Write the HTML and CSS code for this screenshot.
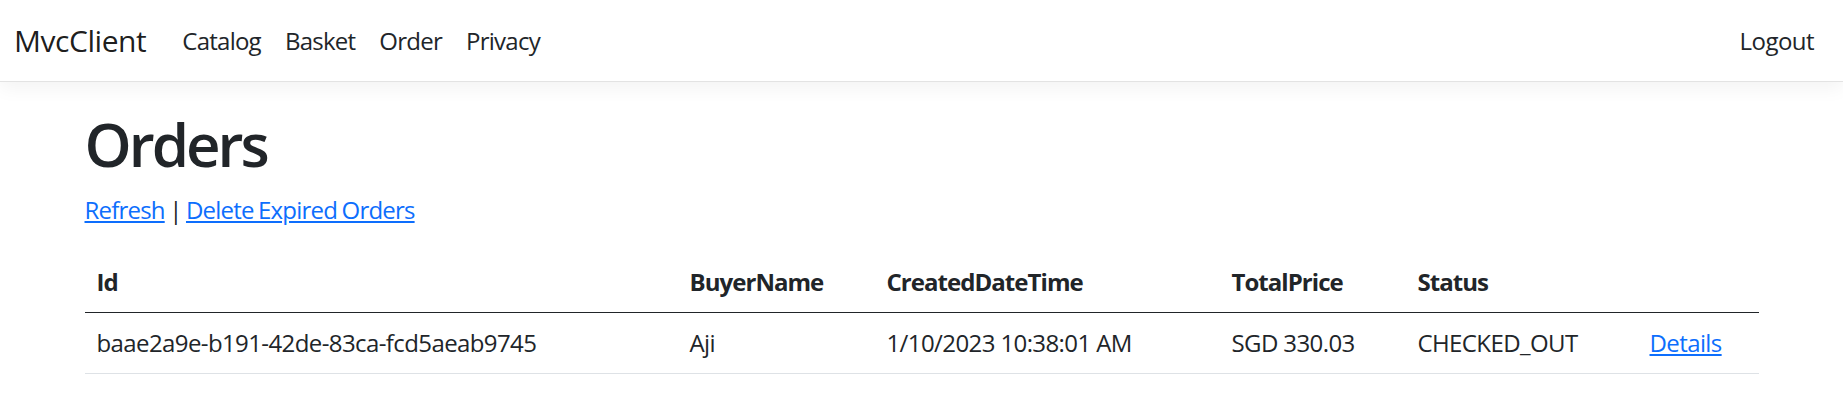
FILE: index.html
```html
<!DOCTYPE html>
<html lang="en">
<head>
<meta charset="utf-8">
<title>Orders - MvcClient</title>
<link rel="stylesheet" href="styles.css">
</head>
<body>
<header class="navbar">
  <a class="brand" href="#">MvcClient</a>
  <nav class="nav-main">
    <a class="nav-link" href="#">Catalog</a>
    <a class="nav-link" href="#">Basket</a>
    <a class="nav-link" href="#">Order</a>
    <a class="nav-link" href="#">Privacy</a>
  </nav>
  <nav class="nav-right">
    <a class="nav-link" href="#">Logout</a>
  </nav>
</header>
<main class="container">
  <h1 class="title">Orders</h1>
  <p class="actions"><a href="#">Refresh</a> | <a href="#">Delete Expired Orders</a></p>
  <table class="table">
    <colgroup>
      <col class="c-id">
      <col class="c-buyer">
      <col class="c-created">
      <col class="c-price">
      <col class="c-status">
      <col class="c-action">
    </colgroup>
    <thead>
      <tr>
        <th>Id</th>
        <th>BuyerName</th>
        <th>CreatedDateTime</th>
        <th>TotalPrice</th>
        <th>Status</th>
        <th></th>
      </tr>
    </thead>
    <tbody>
      <tr>
        <td>baae2a9e-b191-42de-83ca-fcd5aeab9745</td>
        <td>Aji</td>
        <td>1/10/2023 10:38:01 AM</td>
        <td>SGD 330.03</td>
        <td>CHECKED_OUT</td>
        <td><a href="#">Details</a></td>
      </tr>
    </tbody>
  </table>
</main>
</body>
</html>
```
FILE: styles.css
```css
html, body {
  margin: 0;
  padding: 0;
  background: #ffffff;
}
body {
  font-family: "Open Sans", "Noto Sans", sans-serif;
  font-size: 24px;
  line-height: 1.5;
  color: #212529;
  letter-spacing: -0.55px;
}
a {
  color: #0d6efd;
  text-decoration: underline;
}
.navbar {
  display: flex;
  align-items: center;
  height: 81px;
  padding: 0 17px 0 14px;
  border-bottom: 1px solid #e3e3e3;
  box-shadow: 0 6px 18px rgba(0, 0, 0, 0.05);
  box-sizing: content-box;
}
.brand {
  font-size: 30px;
  color: rgba(0, 0, 0, 0.9);
  text-decoration: none;
  margin-right: 24px;
  line-height: 45px;
  letter-spacing: -0.45px;
}
.nav-main, .nav-right {
  display: flex;
}
.nav-main .nav-link {
  letter-spacing: -0.75px;
}
.nav-right {
  margin-left: auto;
}
.nav-link {
  color: #212529;
  text-decoration: none;
  padding: 0 12px;
  line-height: 36px;
}
.container {
  width: 1674px;
  margin: 0 auto;
  padding: 26px 18px 24px;
}
.title {
  font-size: 60px;
  font-weight: 600;
  line-height: 1.2;
  margin: 0 0 12px;
  letter-spacing: -3px;
}
.actions {
  margin: 0 0 24px;
  letter-spacing: -0.8px;
  word-spacing: -1px;
}
.table {
  width: 100%;
  border-collapse: collapse;
  table-layout: fixed;
}
.c-id { width: 593px; }
.c-buyer { width: 197px; }
.c-created { width: 345px; }
.c-price { width: 186px; }
.c-status { width: 232px; }
.c-action { width: 121px; }
.table th, .table td {
  text-align: left;
  padding: 12px;
  vertical-align: top;
  border-bottom: 1px solid #dee2e6;
}
.table th {
  font-weight: 700;
  letter-spacing: -0.95px;
  border-bottom: 1px solid #212529;
}
.table td {
  letter-spacing: -0.6px;
}
```
